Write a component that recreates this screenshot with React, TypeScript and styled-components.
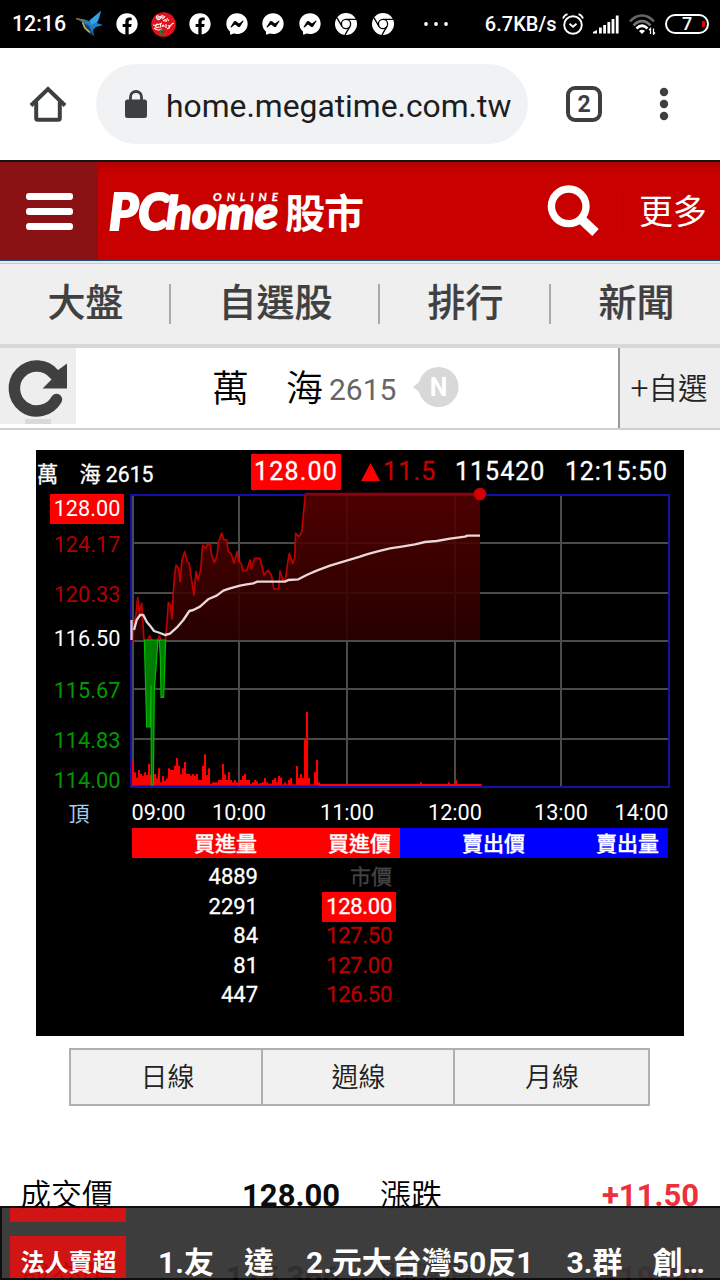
import React from "react";
import styled, { createGlobalStyle } from "styled-components";
import { FaFacebook, FaFacebookMessenger } from "react-icons/fa";

const GlobalStyle = createGlobalStyle`
  * { box-sizing: border-box; }
  body {
    margin: 0;
    background: #fff;
    color: #000;
    font-family: Roboto, "Noto Sans CJK TC", sans-serif;
  }
`;

const Page = styled.div`
  position: relative;
  width: 720px;
  height: 1280px;
  overflow: hidden;
  background: #fff;
`;

/* ---------- Android status bar ---------- */

const StatusBar = styled.div`
  height: 48px;
  display: flex;
  align-items: center;
  justify-content: space-between;
  background: #000;
  color: #fff;
  padding: 0 11px 0 12px;
`;

const StatusGroup = styled.div`
  display: flex;
  align-items: center;
`;

const StatusText = styled.span`
  font-size: 21.3px;
  font-weight: 500;
  line-height: 50px;
  white-space: nowrap;
`;

const SpeedText = styled(StatusText)`
  margin: 0 5px 0 36px;
  font-size: 20px;
`;

const NoticeIcons = styled.div`
  display: flex;
  align-items: center;
  gap: 14.5px;
  margin-left: 10px;
  svg { display: block; flex: none; }
`;

const TightIcon = styled.span<{ $pull: number }>`
  margin-left: -${(p) => p.$pull}px;
`;

const SystemIcons = styled.div`
  display: flex;
  align-items: center;
  gap: 9.5px;
`;

const Battery = styled.div`
  width: 44px;
  height: 20px;
  border: 2px solid #fff;
  border-radius: 10px;
  display: flex;
  align-items: center;
  justify-content: center;
  position: relative;
  font-size: 18px;
  font-weight: 500;
  line-height: 16px;
  &::after {
    content: "";
    position: absolute;
    right: 2px;
    top: 5px;
    width: 3px;
    height: 6px;
    border-radius: 1px;
    background: #e00;
  }
`;

/* ---------- Browser toolbar ---------- */

const BrowserBar = styled.div`
  height: 112px;
  display: flex;
  align-items: center;
  padding: 0 51px 0 29px;
`;

const AddressPill = styled.div`
  width: 432px;
  height: 80px;
  margin-left: 29px;
  border-radius: 40px;
  background: #f1f2f4;
  display: flex;
  align-items: center;
  padding-left: 29px;
`;

const Url = styled.span`
  margin-left: 19px;
  padding-top: 3px;
  font-size: 31.8px;
  line-height: 40px;
  color: #1b1d20;
  white-space: nowrap;
`;

const TabCount = styled.div`
  width: 36px;
  height: 36px;
  margin-left: 38px;
  border: 4px solid #3c4043;
  border-radius: 9px;
  display: flex;
  align-items: center;
  justify-content: center;
  color: #3c4043;
  font-size: 23px;
  font-weight: 700;
`;

const KebabIcon = styled.svg`
  margin-left: auto;
`;

/* ---------- Site header ---------- */

const SiteHeader = styled.header`
  height: 101px;
  border-top: 2px solid #151515;
  border-bottom: 1px solid #1c4f7c;
  background: linear-gradient(#b40000, #c80000 12px);
  display: flex;
`;

const MenuButton = styled.div`
  width: 98px;
  background: #8a1214;
  display: flex;
  flex-direction: column;
  align-items: center;
  gap: 7.4px;
  padding-top: 31px;
`;

const MenuStripe = styled.span`
  width: 47px;
  height: 7.4px;
  border-radius: 3px;
  background: #fff;
`;

const HeaderRight = styled.div`
  margin-left: auto;
  display: flex;
  align-items: center;
  padding-right: 13px;
`;

const More = styled.span`
  margin: 2px 0 0 23px;
  padding-left: 15px;
  border-left: 1px solid #ba0000;
  color: #fff;
  font-size: 34px;
  line-height: 40px;
`;

const NavBar = styled.nav`
  height: 87px;
  border-top: 2px solid #e9e9ef;
  border-bottom: 4px solid #d8d8d8;
  background: #efefef;
  box-shadow: inset 0 1px 0 #cacaca;
  display: flex;
  align-items: center;
`;

const NavItem = styled.div<{ $w: number; $last?: boolean }>`
  width: ${(p) => p.$w}px;
  height: 40px;
  padding-left: 2px;
  border-right: ${(p) => (p.$last ? "0" : "2px solid #aaa")};
  text-align: center;
  font-size: 38px;
  font-weight: 500;
  line-height: 38px;
  color: #404040;
  -webkit-text-stroke: 0.2px #404040;
`;

/* ---------- Stock title bar ---------- */

const StockBar = styled.div`
  height: 82px;
  border-bottom: 2px solid #cfcfcf;
  display: flex;
`;

const RefreshBox = styled.div`
  width: 76px;
  height: 76px;
  background: #eee;
  svg { display: block; }
`;

const StockTitle = styled.div`
  flex: 1;
  display: flex;
  align-items: center;
  padding-left: 136px;
  white-space: pre;
`;

const StockName = styled.span`
  padding-top: 3px;
  font-size: 37px;
  font-weight: 350;
  line-height: 77px;
`;

const StockCode = styled.span`
  margin-left: 6px;
  padding-top: 4px;
  font-size: 30px;
  line-height: 76px;
  color: #666;
`;

const BubbleIcon = styled.svg`
  margin-left: 16px;
  margin-bottom: 2px;
`;

const AddButton = styled.div`
  width: 102px;
  height: 80px;
  border-left: 2px solid #999;
  background: #eee;
  color: #222;
  font-size: 29.5px;
  font-weight: 350;
  line-height: 80px;
  text-align: center;
  white-space: nowrap;
  padding-right: 2px;
`;

const Plus = styled.span`
  font-size: 32px;
`;

/* ---------- Quote chart ---------- */

const ChartPanel = styled.section`
  width: 648px;
  height: 586px;
  margin: 20px 0 0 36px;
  background: #000;
  color: #fff;
  overflow: hidden;
  -webkit-text-stroke: 0.3px currentColor;
`;

const ChartHead = styled.div`
  height: 40px;
  display: flex;
  align-items: center;
  padding-top: 4px;
  font-size: 25px;
  line-height: 36px;
  white-space: pre;
  & > span { flex: none; }
`;

const ChartName = styled.span`
  width: 215px;
  padding: 5px 0 0 1px;
  font-size: 21.2px;
`;

const LastPrice = styled.span`
  width: 90px;
  height: 36px;
  background: #f00;
  text-align: center;
  letter-spacing: 1.2px;
`;

const Change = styled.span`
  width: 94px;
  margin-left: 20px;
  display: flex;
  align-items: center;
  gap: 3px;
  color: #c40000;
  letter-spacing: 1.2px;
`;

const Volume = styled.span`
  width: 110px;
  letter-spacing: 1px;
`;

const Clock = styled.span`
  letter-spacing: 0.8px;
`;

const ChartSvg = styled.svg`
  display: block;
  overflow: visible;
  font-family: Roboto, "Noto Sans CJK TC", sans-serif;
`;

const BookHead = styled.div`
  width: 536px;
  height: 30px;
  margin-left: 96px;
  display: grid;
  grid-template-columns: repeat(4, 134px);
  grid-template-rows: 30px;
`;

const BookHeadCell = styled.div<{ $side: "buy" | "sell" }>`
  background: ${(p) => (p.$side === "buy" ? "#f00" : "#00f")};
  padding-right: 9px;
  text-align: right;
  font-size: 21px;
  font-weight: 500;
  line-height: 33px;
`;

const BookBody = styled.div`
  margin-left: 96px;
  padding-top: 4px;
`;

const BookRow = styled.div`
  height: 29.5px;
  display: grid;
  grid-template-columns: 134px 134px;
  align-items: center;
  font-size: 22px;
  line-height: 30px;
  text-align: right;
`;

const BookQty = styled.span`
  padding-right: 8px;
`;

const BookPrice = styled.span<{ $kind: "market" | "limit" | "down" }>`
  justify-self: end;
  height: 30px;
  margin-right: 4px;
  padding: 0 4px;
  letter-spacing: ${(p) => (p.$kind === "market" ? "0" : "-0.3px")};
  font-size: ${(p) => (p.$kind === "market" ? "21px" : "22px")};
  background: ${(p) => (p.$kind === "limit" ? "#f00" : "transparent")};
  color: ${(p) =>
    p.$kind === "market" ? "#444" : p.$kind === "limit" ? "#fff" : "#b80000"};
`;

/* ---------- Period tabs ---------- */

const PeriodTabs = styled.div`
  width: 581px;
  height: 58px;
  margin: 12px 0 0 69px;
  border: 2px solid #b0b0b0;
  background: #f1f1f1;
  display: grid;
  grid-template-columns: 190px 192px 1fr;
  grid-template-rows: 54px;
`;

const PeriodTab = styled.div`
  padding-left: 3px;
  font-size: 27px;
  font-weight: 350;
  line-height: 57px;
  text-align: center;
  color: #222;
  & + & { border-left: 2px solid #b0b0b0; padding-left: 1px; }
`;

/* ---------- Quote details ---------- */

const Details = styled.div`
  margin-top: 49px;
`;

const DetailRow = styled.div`
  height: 82px;
  display: grid;
  grid-template-columns: 320px 319px;
  column-gap: 40px;
  padding-left: 20px;
  line-height: 82px;
`;

const DetailCell = styled.div`
  display: flex;
  justify-content: space-between;
  font-size: 31px;
`;

const DetailLabel = styled.span`
  font-weight: 350;
`;

const DetailValue = styled.span<{ $up?: boolean }>`
  font-weight: 700;
  color: ${(p) => (p.$up ? "#ee2f3c" : "#0c0c0c")};
`;

/* ---------- Ticker laid over the page bottom ---------- */

const Ticker = styled.div`
  position: absolute;
  left: 0;
  bottom: 0;
  width: 720px;
  height: 74px;
  border: 2px solid #000;
  border-right: 0;
  background: #333131;
  opacity: 0.94;
  color: #fff;
  padding-left: 8px;
  overflow: hidden;
`;

const TickerPrevTag = styled.div`
  width: 116px;
  height: 14px;
  background: #cf0606;
`;

const TickerRow = styled.div`
  margin-top: 14px;
  height: 42px;
  display: flex;
  white-space: pre;
`;

const TickerTag = styled.span`
  width: 116px;
  height: 42px;
  background: #cf0606;
  text-align: center;
  font-size: 24px;
  font-weight: 700;
  line-height: 55px;
  padding-left: 1px;
`;

const TickerItem = styled.span<{ $gap: number }>`
  margin-left: ${(p) => p.$gap}px;
  font-size: 30px;
  font-weight: 700;
  line-height: 54px;
`;

/* ---------- Icons ---------- */

const BirdIcon = () => (
  <svg width="28" height="26" viewBox="0 0 28 26">
    <path d="M0 8 L7 8 L13 10 L25 0 L23 8 L21 12 L27 14 L20 16 L17 19 L18 25 L12 21 L8 17 L6 11 Z" fill="#1c7fc4" />
    <path d="M14 9 L25 0 L21 11 L15 14 Z" fill="#3aa0e6" />
    <path d="M6 11 L9 18 L14 22 L18 25 L13 15 Z" fill="#123f78" />
    <path d="M6.500 11.500 L9 17 L14 21.500" stroke="#d8a93a" strokeWidth="1.600" fill="none" />
    <path d="M0 7.500 L7 9 L10 11" stroke="#8a6a2a" strokeWidth="1.400" fill="none" />
  </svg>
);

const SealIcon = () => (
  <svg width="25" height="25" viewBox="0 0 25 25">
    <circle cx="12.500" cy="12.500" r="12.300" fill="#e3111b" />
    <path
      d="M6 7c-2-3 1-5 2-2c2-2 3 1 0 3zM11 3c-2 3 1 6 3 1M12 9c3-3 5-1 3 1M16 6l2 3"
      fill="#fff"
      fillOpacity="0.6"
      stroke="#fff"
      strokeWidth="1"
    />
    <path
      d="M2 13c4 1 6-1 9-2M7 12c-4 0-3 5 1 3M10 11l-1 5M11 15c1-3 2-2 2 0M15 12v4M17 14c2-2 2 3 0 2M23 11c-3 0-4 5-7 6M3 16c3 3 6 2 8 1"
      fill="none"
      stroke="#fff"
      strokeWidth="1.100"
    />
    <rect x="9.500" y="18" width="5" height="4" fill="#c01818" stroke="#128a3a" strokeWidth="1" />
  </svg>
);

const ChromeIcon = () => (
  <svg width="22" height="22" viewBox="0 0 22 22">
    <circle cx="11" cy="11" r="11" fill="#fff" />
    <g fill="none" stroke="#000" strokeWidth="1.300">
      <circle cx="11" cy="11" r="4.600" />
      <path d="M11 6.400H21M7 13.300L2 4.800M15 13.300L10 21.900" />
    </g>
  </svg>
);

const DotsIcon = () => (
  <svg width="26" height="6" viewBox="0 0 26 6" fill="#fff">
    <circle cx="3" cy="3" r="1.900" />
    <circle cx="13" cy="3" r="1.900" />
    <circle cx="23" cy="3" r="1.900" />
  </svg>
);

const AlarmIcon = () => (
  <svg width="22" height="22" viewBox="0 0 22 22" fill="none" stroke="#fff" strokeWidth="1.900">
    <circle cx="11" cy="12" r="8.800" />
    <path d="M7.500 10.800l3.500 3 3.500-3" />
    <path d="M1 5.500C1.800 3.300 3.300 1.800 5.500 1.200M21 5.500C20.200 3.300 18.700 1.800 16.500 1.200" />
  </svg>
);

const SignalIcon = () => (
  <svg width="26" height="19" viewBox="0 0 26 19" fill="#fff">
    <path d="M0 18.500V17L4 15v3.500z" />
    <rect x="6" y="12.500" width="2.800" height="6" />
    <rect x="10.200" y="10" width="2.800" height="8.500" />
    <rect x="14.400" y="7" width="2.800" height="11.500" />
    <rect x="18.600" y="4" width="2.800" height="14.500" />
    <rect x="22.800" y="0.500" width="2.800" height="18" />
  </svg>
);

const WifiIcon = () => (
  <svg width="27" height="21" viewBox="0 0 27 21" fill="none" strokeWidth="2.600">
    <path d="M1 7.500C8-0.500 18-0.500 25 7.500" stroke="#666" />
    <path d="M4.500 11.500C9.500 5.700 16.500 5.700 21.500 11.500" stroke="#777" />
    <path d="M7.500 14.500C11 11 15 11 18.500 14.500" stroke="#fff" />
    <path d="M13 20l-3-3q3-2.500 6 0z" fill="#fff" />
    <path d="M21.500 20v-5.500l-1.500 1.500M24.500 14.500V20l1.500-1.500" stroke="#fff" strokeWidth="1.300" />
  </svg>
);

const HomeIcon = () => (
  <svg width="38" height="38" viewBox="0 0 38 38" fill="none" stroke="#3c4043" strokeWidth="4">
    <path d="M2 20.500L19 4L36 20.500" />
    <path d="M7.200 17V33.200Q7.200 34.800 8.800 34.800H29.200Q30.800 34.800 30.800 33.200V17" />
  </svg>
);

const LockIcon = () => (
  <svg width="22" height="28" viewBox="0 0 22 28">
    <rect y="9.500" width="22" height="18.500" rx="2.500" fill="#3c4043" />
    <path d="M5.500 11V7A5.500 5.500 0 0 1 16.500 7V11" fill="none" stroke="#3c4043" strokeWidth="2.800" />
  </svg>
);

const Logo = () => (
  <svg width="270" height="98" viewBox="98 162 270 98" fill="#fff">
    <g fontFamily="Lato, sans-serif" fontStyle="italic" stroke="#fff">
      <text x="109" y="230" fontSize="51" fontWeight="900" strokeWidth="2.200" textLength="60" lengthAdjust="spacingAndGlyphs">PC</text>
      <text x="166" y="228.500" fontSize="46" fontWeight="900" strokeWidth="1.600" textLength="112" lengthAdjust="spacingAndGlyphs">home</text>
      <text x="213" y="201" fontSize="11.500" fontWeight="700" strokeWidth="0.300" textLength="65">ONLINE</text>
    </g>
    <text x="285" y="228" fontSize="40" fontWeight="700" textLength="79" fontFamily="Noto Sans CJK TC, sans-serif">股市</text>
  </svg>
);

const SearchIcon = () => (
  <svg width="54" height="54" viewBox="0 0 54 54" fill="none" stroke="#fff">
    <circle cx="22.700" cy="22.300" r="17.300" strokeWidth="7.400" />
    <path d="M34 34L49.500 48.500" strokeWidth="9.500" />
  </svg>
);

const RefreshIcon = () => (
  <svg width="76" height="76" viewBox="0 0 76 76">
    <path d="M56.500 51.500A22.500 22.500 0 1 1 54.500 26.500" fill="none" stroke="#404040" strokeWidth="11.500" strokeLinecap="round" />
    <path d="M67 15.500V40.500H42.500L51.500 31.500L54 25Z" fill="#404040" />
    <rect x="25" y="71" width="26" height="5" fill="#dad8d8" />
  </svg>
);

/* ---------- Chart data ---------- */

const hLines = [543, 593, 641, 689, 739];
const vLines = [133, 239, 347, 455, 561];

const priceLabels = [
  { text: "124.17", y: 552, color: "#b00000" },
  { text: "120.33", y: 602, color: "#b00000" },
  { text: "116.50", y: 646, color: "#fff" },
  { text: "115.67", y: 698, color: "#009a00" },
  { text: "114.83", y: 748, color: "#009a00" },
  { text: "114.00", y: 788, color: "#009a00" },
];

const timeLabels: [string, number][] = [
  ["09:00", 158.5], ["10:00", 239], ["11:00", 347], ["12:00", 455], ["13:00", 561], ["14:00", 641.5],
];

/* Series are kept in thirds of a pixel, measured from (30, 445). */
const pricePath =
  "308,588 312,540 318,510 323,457 328,505 335,475 338,520 342,588 352,588 359,572 366,588 382,588 388,572 394,588 406,588 412,520 415,473 421,480 426,522 430,440 433,400 438,360 446,370 450,410 456,345 464,320 472,350 478,355 484,400 492,450 498,380 504,405 512,375 518,300 527,310 533,297 540,299 545,330 553,353 561,330 566,290 575,264 582,284 590,285 595,320 603,325 612,355 621,320 626,350 634,355 638,377 650,377 660,345 664,372 674,340 690,340 695,360 702,390 714,376 724,390 732,432 746,432 750,378 760,410 768,395 772,360 778,325 788,355 794,340 797,265 806,275 815,262 820,210 826,150";

const averagePath =
  "312,555 320,525 330,510 340,510 350,530 360,542 372,558 390,564 405,570 420,566 440,548 460,525 478,498 490,495 510,485 536,462 560,452 580,437 600,430 630,422 650,418 670,415 682,410 765,410 775,405 805,403 830,390 860,377 900,362 950,347 990,335 1010,328 1040,320 1080,310 1120,304 1155,298 1185,291 1220,288 1260,281 1305,275 1312,272 1350,272";

const fallPath =
  "343,585 350,846 360,846 363,720 364,1020 370,1020 373,735 384,585 388,585 391,640 393,757 401,757 407,585";

const volumeTops = [
  395, 427, 443, 420, 432, 438, 427, 435, 402, 435, 440, 432, 445, 415, 457, 438, 452, 445, 415, 420,
  420, 407, 384, 407, 433, 415, 396, 432, 432, 437, 432, 437, 432, 450, 450, 408, 373, 435, 415, 461,
  457, 457, 457, 450, 450, 402, 433, 450, 426, 450, 457, 450, 457, 457, 450, 438, 432, 450, 450, 461,
  457, 450, 454, 461, 459, 457, 444, 457, 461, 461, 450, 444, 457, 438, 443, 463, 457, 463, 450, 444,
  463, 463, 408, 444, 432, 444, 330, 246, 444, 463, 463, 426, 390, 457,
];

const lateVolumes = [
  { x: 1170, top: 457 }, { x: 1254, top: 457 }, { x: 1275, top: 450 },
];

const QuoteChart = () => (
  <ChartSvg width="648" height="338" viewBox="36 490 648 338" fontSize="21.700">
    <defs>
      <linearGradient id="area" gradientUnits="userSpaceOnUse" x1="0" y1="150" x2="0" y2="588">
        <stop offset="0" stopColor="#580000" />
        <stop offset="1" stopColor="#2c0000" />
      </linearGradient>
    </defs>
    <g stroke="#4a4a4a" strokeWidth="2">
      {hLines.map((y) => <line key={y} x1="133" x2="668" y1={y} y2={y} />)}
      {vLines.map((x) => <line key={x} x1={x} x2={x} y1="496" y2="786" />)}
    </g>
    <path d="M131 495H669V787H131Z" fill="none" stroke="#1212a8" strokeWidth="2" />
    <g transform="translate(30 445) scale(0.33333)">
      <polygon points={`${pricePath} 1350,148 1350,585 308,585`} fill="url(#area)" fillOpacity="0.88" />
      <g fill="#f00">
        {volumeTops.map((top, i) => (
          <rect key={i} x={306 + i * 6} y={555 + top} width="6.200" height={467 - top} />
        ))}
        <rect x="864" y="1017" width="491" height="6" />
        {lateVolumes.map((v) => (
          <rect key={v.x} x={v.x} y={555 + v.top} width="6" height={467 - v.top} />
        ))}
      </g>
      <polyline points={pricePath} fill="none" stroke="#c00000" strokeWidth="5" strokeLinejoin="round" />
      <polygon points={fallPath} fill="#007c00" stroke="#00bc00" strokeWidth="3.500" />
      <line x1="824" x2="1350" y1="148" y2="148" stroke="#8c0010" strokeWidth="9" />
      <rect x="301" y="525" width="7" height="60" fill="#e0c4d8" />
      <polyline points={averagePath} fill="none" stroke="#ead8d8" strokeWidth="7" strokeLinejoin="round" />
    </g>
    <circle cx="480" cy="494" r="6.300" fill="#d00000" />
    <rect x="50" y="494" width="74" height="30" fill="#f00" />
    <text x="87" y="516" fill="#fff" textAnchor="middle">128.00</text>
    {priceLabels.map((l) => (
      <text key={l.text} x="87" y={l.y} fill={l.color} textAnchor="middle">{l.text}</text>
    ))}
    <text x="79" y="821" fontSize="21" fill="#a4cdea" textAnchor="middle">頂</text>
    {timeLabels.map(([t, x]) => (
      <text key={t} x={x} y="820" fill="#fff" textAnchor="middle">{t}</text>
    ))}
  </ChartSvg>
);

const book: { qty: string; price: string; kind: "market" | "limit" | "down" }[] = [
  { qty: "4889", price: "市價", kind: "market" },
  { qty: "2291", price: "128.00", kind: "limit" },
  { qty: "84", price: "127.50", kind: "down" },
  { qty: "81", price: "127.00", kind: "down" },
  { qty: "447", price: "126.50", kind: "down" },
];

export default function App() {
  return (
    <>
      <GlobalStyle />
      <Page>
        <StatusBar>
          <StatusGroup>
            <StatusText>12:16</StatusText>
            <NoticeIcons>
              <BirdIcon />
              <TightIcon $pull={2.500}><FaFacebook size={22} /></TightIcon>
              <TightIcon $pull={1.500}><SealIcon /></TightIcon>
              <TightIcon $pull={1.500}><FaFacebook size={22} /></TightIcon>
              <FaFacebookMessenger size={22} />
              <FaFacebookMessenger size={22} />
              <FaFacebookMessenger size={22} />
              <ChromeIcon />
              <ChromeIcon />
            </NoticeIcons>
          </StatusGroup>
          <StatusGroup>
            <DotsIcon />
            <SpeedText>6.7KB/s</SpeedText>
            <SystemIcons>
              <AlarmIcon />
              <SignalIcon />
              <WifiIcon />
              <Battery>7</Battery>
            </SystemIcons>
          </StatusGroup>
        </StatusBar>

        <BrowserBar>
          <HomeIcon />
          <AddressPill>
            <LockIcon />
            <Url>home.megatime.com.tw</Url>
          </AddressPill>
          <TabCount>2</TabCount>
          <KebabIcon width="10" height="34" viewBox="0 0 10 34" fill="#3c4043">
            <circle cx="5" cy="5" r="4.200" />
            <circle cx="5" cy="17" r="4.200" />
            <circle cx="5" cy="29" r="4.200" />
          </KebabIcon>
        </BrowserBar>

        <SiteHeader>
          <MenuButton>
            <MenuStripe />
            <MenuStripe />
            <MenuStripe />
          </MenuButton>
          <Logo />
          <HeaderRight>
            <SearchIcon />
            <More>更多</More>
          </HeaderRight>
        </SiteHeader>

        <NavBar>
          <NavItem $w={171}>大盤</NavItem>
          <NavItem $w={209}>自選股</NavItem>
          <NavItem $w={171}>排行</NavItem>
          <NavItem $w={169} $last>新聞</NavItem>
        </NavBar>

        <StockBar>
          <RefreshBox><RefreshIcon /></RefreshBox>
          <StockTitle>
            <StockName>萬　海</StockName>
            <StockCode>2615</StockCode>
            <BubbleIcon width="47" height="42" viewBox="0 0 47 42">
              <path d="M1 21L12 12V30Z" fill="#d8d8d8" />
              <circle cx="26.500" cy="21" r="20" fill="#d8d8d8" />
              <text x="26.500" y="29.500" fontSize="25" fontWeight="700" fill="#fff" textAnchor="middle">N</text>
            </BubbleIcon>
          </StockTitle>
          <AddButton><Plus>+</Plus>自選</AddButton>
        </StockBar>

        <ChartPanel>
          <ChartHead>
            <ChartName>萬　海 2615</ChartName>
            <LastPrice>128.00</LastPrice>
            <Change>
              <svg width="19" height="18" viewBox="0 0 19 18"><path d="M9.500 0L19 18H0Z" fill="#f00" /></svg>
              11.5
            </Change>
            <Volume>115420</Volume>
            <Clock>12:15:50</Clock>
          </ChartHead>
          <QuoteChart />
          <BookHead>
            <BookHeadCell $side="buy">買進量</BookHeadCell>
            <BookHeadCell $side="buy">買進價</BookHeadCell>
            <BookHeadCell $side="sell">賣出價</BookHeadCell>
            <BookHeadCell $side="sell">賣出量</BookHeadCell>
          </BookHead>
          <BookBody>
            {book.map((r) => (
              <BookRow key={r.qty}>
                <BookQty>{r.qty}</BookQty>
                <BookPrice $kind={r.kind}>{r.price}</BookPrice>
              </BookRow>
            ))}
          </BookBody>
        </ChartPanel>

        <PeriodTabs>
          <PeriodTab>日線</PeriodTab>
          <PeriodTab>週線</PeriodTab>
          <PeriodTab>月線</PeriodTab>
        </PeriodTabs>

        <Details>
          <DetailRow>
            <DetailCell>
              <DetailLabel>成交價</DetailLabel>
              <DetailValue>128.00</DetailValue>
            </DetailCell>
            <DetailCell>
              <DetailLabel>漲跌</DetailLabel>
              <DetailValue $up>+11.50</DetailValue>
            </DetailCell>
          </DetailRow>
          <DetailRow>
            <DetailCell>
              <DetailLabel>成交張</DetailLabel>
              <DetailValue>115,366</DetailValue>
            </DetailCell>
            <DetailCell>
              <DetailLabel>開盤價</DetailLabel>
              <DetailValue $up>119.50</DetailValue>
            </DetailCell>
          </DetailRow>
        </Details>

        <Ticker>
          <TickerPrevTag />
          <TickerRow>
            <TickerTag>法人賣超</TickerTag>
            <TickerItem $gap={32}>1.友　達</TickerItem>
            <TickerItem $gap={32}>2.元大台灣50反1</TickerItem>
            <TickerItem $gap={33}>3.群　創…</TickerItem>
          </TickerRow>
        </Ticker>
      </Page>
    </>
  );
}
